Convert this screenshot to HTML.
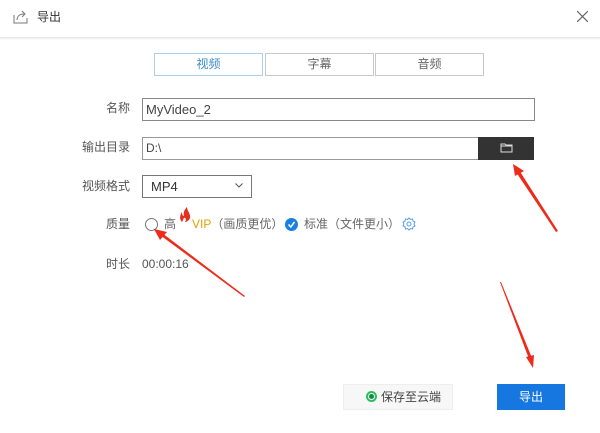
<!DOCTYPE html>
<html><head><meta charset="utf-8"><style>
body{margin:0;width:600px;height:433px;background:#fff;font-family:"Liberation Sans","Noto Sans CJK SC",sans-serif;position:relative;overflow:hidden;color:#333}
.a{position:absolute}
.lbl{position:absolute;font-size:12px;color:#555;text-align:right;width:70px;left:60px;line-height:14px}
.tab{position:absolute;top:53px;height:21px;border:1px solid #c8c8c8;font-size:12px;color:#666;text-align:center;line-height:21px;width:107px}
</style></head><body>
<div class="a" style="left:0;top:0;width:600px;height:37px;border-bottom:1px solid #e6e6e6;box-shadow:0 1px 2px #eee"></div>
<svg class="a" style="left:13px;top:9px" width="16" height="16" viewBox="0 0 16 16" fill="none" stroke="#777" stroke-width="1"><path d="M1 6v8h13V9"/><path d="M4 11c0-4 3-6 7-6"/><path d="M9 2l3 3-3 3"/></svg>
<div class="a" style="left:37px;top:10px;font-size:12px;color:#333;line-height:14px">导出</div>
<svg class="a" style="left:577px;top:11px" width="11" height="11" stroke="#666" stroke-width="1.2"><path d="M0 0L11 11M11 0L0 11"/></svg>
<div class="tab" style="left:154px;border-color:#a9d2ee;color:#3a8cc6">视频</div>
<div class="tab" style="left:265px">字幕</div>
<div class="tab" style="left:375px">音频</div>
<div class="lbl" style="top:101px">名称</div>
<div class="a" style="left:142px;top:98px;width:388px;height:21px;border:1px solid #888;font-size:13px;line-height:21px;padding-left:3px;color:#444">MyVideo_2</div>
<div class="lbl" style="top:140px">输出目录</div>
<div class="a" style="left:142px;top:137px;width:333px;height:21px;border:1px solid #999;border-right:none;font-size:12px;line-height:21px;padding-left:3px;color:#444">D:\</div>
<div class="a" style="left:478px;top:137px;width:56px;height:23px;background:#333"></div>
<svg class="a" style="left:500px;top:142px" width="13" height="11" viewBox="0 0 13 11" fill="none" stroke="#ddd"><path d="M1 2h4l1 1h6v7H1z"/><path d="M1 4h11"/></svg>
<div class="lbl" style="top:179px">视频格式</div>
<div class="a" style="left:142px;top:175px;border:1px solid #777;font-size:13px;line-height:21px;padding-left:8px;box-sizing:border-box;width:110px;height:23px">MP4</div>
<svg class="a" style="left:235px;top:183px" width="8" height="5" fill="none" stroke="#555"><path d="M0.5 0.5L4 4L7.5 0.5"/></svg>
<div class="lbl" style="top:217px">质量</div>
<div class="a" style="left:145px;top:218px;width:11px;height:11px;border:1px solid #777;border-radius:50%"></div>
<div class="a" style="left:164px;top:217px;font-size:12px;color:#666;line-height:14px">高</div>
<svg class="a" style="left:178px;top:207px" width="14" height="16" viewBox="0 0 14 16" fill="#e53020"><path d="M4 15C1 12 2 8 4 5C4 8 5 9 6 9C5 5 7 2 9 0C9 4 13 7 12 11C11 14 8 15 7 15C9 12 7 10 6 11C5 12 5 14 4 15Z"/></svg>
<div class="a" style="left:192px;top:217px;font-size:12px;color:#e0a000;line-height:14px">VIP<span style="color:#666">（画质更优）</span></div>
<div class="a" style="left:285px;top:218px;width:13px;height:13px;background:#1a7fe0;border-radius:50%"></div>
<svg class="a" style="left:285px;top:218px" width="13" height="13" fill="none" stroke="#fff" stroke-width="1.5"><path d="M3.5 6.5L5.8 9L9.5 4"/></svg>
<div class="a" style="left:304px;top:217px;font-size:12px;color:#666;line-height:14px">标准（文件更小）</div>
<svg class="a" style="left:402px;top:217px" width="14" height="14" viewBox="0 0 14 14" fill="none" stroke="#5b9fe6" stroke-width="1"><path d="M7 1L8.5 2.5L10.5 2L11 4L13 5L12 7L13 9L11 10L10.5 12L8.5 11.5L7 13L5.5 11.5L3.5 12L3 10L1 9L2 7L1 5L3 4L3.5 2L5.5 2.5Z"/><circle cx="7" cy="7" r="2"/></svg>
<div class="lbl" style="top:257px">时长</div>
<div class="a" style="left:142px;top:257px;font-size:12px;color:#555;line-height:14px">00:00:16</div>
<div class="a" style="left:343px;top:384px;width:110px;height:26px;background:#f7f7f7;border:1px solid #eee;box-sizing:border-box"></div>
<div class="a" style="left:366px;top:391px;width:7px;height:7px;border:2px solid #2ac060;border-radius:50%"></div>
<div class="a" style="left:369px;top:394px;width:5px;height:5px;background:#1a8a40;border-radius:50%"></div>
<div class="a" style="left:381px;top:390px;font-size:12px;color:#444;line-height:14px">保存至云端</div>
<div class="a" style="left:497px;top:384px;width:68px;height:26px;background:#1677e0;color:#fff;font-size:12px;text-align:center;line-height:26px">导出</div>
<svg class="a" style="left:0;top:0" width="600" height="433">
<g fill="#ee2a1a">
<polygon points="558,231 556,232 516,172 519,170"/><polygon points="513,164 524,171 515,176"/>
<polygon points="245,296 244,297 160,235 162,233"/><polygon points="154,229 167,232 160,240"/>
<polygon points="500,282 501,282 532,358 529,359"/><polygon points="533,368 526,357 534,355"/>
</g></svg>
</body></html>
